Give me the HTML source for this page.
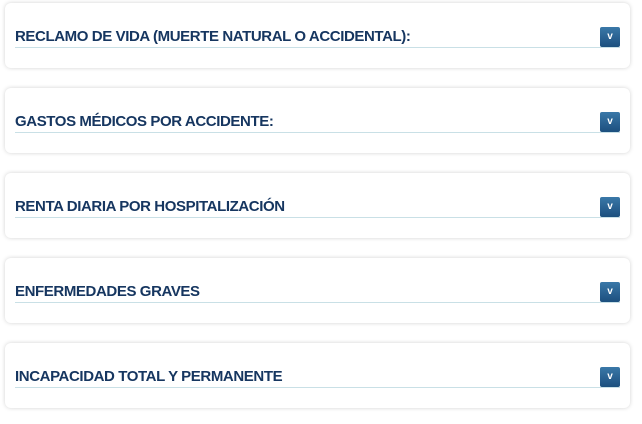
<!DOCTYPE html>
<html><head><meta charset="utf-8"><style>
body{margin:0;background:#fff;width:642px;height:424px;overflow:hidden;font-family:"Liberation Sans",sans-serif}
.card{position:absolute;left:5px;width:625px;height:65px;background:#fff;border-radius:6px;box-shadow:0 0 4px rgba(0,0,0,0.18)}
.t{position:absolute;left:10px;top:25px;font-size:15px;font-weight:bold;color:#163660;letter-spacing:-0.4px;white-space:nowrap}
.u{position:absolute;left:10px;top:44px;width:605px;height:1px;background:#c9e0e6}
.b{position:absolute;left:595px;top:24px;width:20px;height:20px;border-radius:2px;background:linear-gradient(#3a78a8,#1c4f7e);color:#fff;font-size:10px;font-weight:bold;text-align:center;line-height:20px}
</style></head><body>
<div class="card" style="top:3px"><div class="t">RECLAMO DE VIDA (MUERTE NATURAL O ACCIDENTAL):</div><div class="u"></div><div class="b">v</div></div>
<div class="card" style="top:88px"><div class="t">GASTOS MÉDICOS POR ACCIDENTE:</div><div class="u"></div><div class="b">v</div></div>
<div class="card" style="top:173px"><div class="t">RENTA DIARIA POR HOSPITALIZACIÓN</div><div class="u"></div><div class="b">v</div></div>
<div class="card" style="top:258px"><div class="t">ENFERMEDADES GRAVES</div><div class="u"></div><div class="b">v</div></div>
<div class="card" style="top:343px"><div class="t">INCAPACIDAD TOTAL Y PERMANENTE</div><div class="u"></div><div class="b">v</div></div>
</body></html>
